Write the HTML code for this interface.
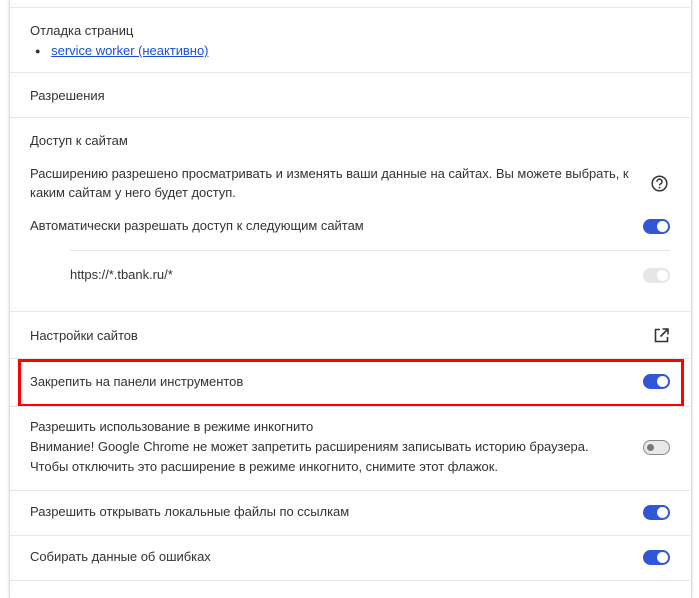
<!DOCTYPE html>
<html><head><meta charset="utf-8"><style>
body{margin:0;width:699px;height:586px;background:#fff;overflow:hidden;font-family:"Liberation Sans",sans-serif;font-size:13px;color:#333;position:relative}
.card{position:absolute;left:9px;top:-2px;width:681px;height:600px;border-left:1px solid #ddd;border-right:1px solid #ddd;box-shadow:0 0 3px rgba(0,0,0,.15)}
.hr{position:absolute;left:10px;width:680px;height:1px;background:#e6e6e6}
.t{position:absolute;left:30px;white-space:nowrap;line-height:20px;letter-spacing:-0.03px}
.tg{position:absolute;left:643px;width:27px;height:15px;border-radius:8px;background:#3057d5}
.tg:after{content:"";position:absolute;right:2px;top:2px;width:11px;height:11px;border-radius:50%;background:#fff}
.tg.dis{background:#e6e6e6}
.tg.off{background:#e8e8e8;border:1px solid #888;box-sizing:border-box}
.tg.off:after{left:3px;right:auto;top:3px;width:7px;height:7px;background:#777}
a{color:#1a4fd6;text-decoration:underline}
</style></head><body>
<div class="card"></div>
<div class="hr" style="top:7px"></div>
<div class="t" style="top:21px">Отладка страниц</div>
<div class="t" style="top:41px;left:35px"><span style="font-size:9px;position:relative;top:-1px">●</span>&nbsp;&nbsp;&nbsp;<a>service worker (неактивно)</a></div>
<div class="hr" style="top:72px"></div>
<div class="t" style="top:86px">Разрешения</div>
<div class="hr" style="top:117px"></div>
<div class="t" style="top:131px">Доступ к сайтам</div>
<div class="t" style="top:164px">Расширению разрешено просматривать и изменять ваши данные на сайтах. Вы можете выбрать, к</div>
<div class="t" style="top:183px">каким сайтам у него будет доступ.</div>
<svg style="position:absolute;left:651px;top:175px" width="17" height="17" viewBox="0 0 17 17"><circle cx="8.5" cy="8.5" r="7.3" fill="none" stroke="#333" stroke-width="1.5"/><path d="M6 6.8a2.5 2.5 0 1 1 3.3 2.2c-.6.3-.8.7-.8 1.4" fill="none" stroke="#333" stroke-width="1.5"/><circle cx="8.5" cy="12.6" r=".9" fill="#333"/></svg>
<div class="t" style="top:216px">Автоматически разрешать доступ к следующим сайтам</div>
<div class="tg" style="top:219px"></div>
<div class="hr" style="top:250px;left:70px;width:600px"></div>
<div class="t" style="top:265px;left:70px">https://*.tbank.ru/*</div>
<div class="tg dis" style="top:268px"></div>
<div class="hr" style="top:311px"></div>
<div class="t" style="top:326px">Настройки сайтов</div>
<svg style="position:absolute;left:654px;top:328px" width="15" height="15" viewBox="0 0 15 15"><path d="M6 1.5H1.5v12h12V9" fill="none" stroke="#333" stroke-width="1.6"/><path d="M8.5 1h5.5v5.5M14 1L6.5 8.5" fill="none" stroke="#333" stroke-width="1.6"/></svg>
<div class="hr" style="top:358px"></div>
<div class="t" style="top:372px">Закрепить на панели инструментов</div>
<div class="tg" style="top:374px"></div>
<div style="position:absolute;left:18px;top:359px;width:660px;height:42px;border:3px solid #f00"></div>
<div class="hr" style="top:406px"></div>
<div class="t" style="top:417px">Разрешить использование в режиме инкогнито</div>
<div class="t" style="top:437px">Внимание! Google Chrome не может запретить расширениям записывать историю браузера.</div>
<div class="t" style="top:457px">Чтобы отключить это расширение в режиме инкогнито, снимите этот флажок.</div>
<div class="tg off" style="top:440px"></div>
<div class="hr" style="top:490px"></div>
<div class="t" style="top:502px">Разрешить открывать локальные файлы по ссылкам</div>
<div class="tg" style="top:505px"></div>
<div class="hr" style="top:535px"></div>
<div class="t" style="top:547px">Собирать данные об ошибках</div>
<div class="tg" style="top:550px"></div>
<div class="hr" style="top:580px"></div>
</body></html>
